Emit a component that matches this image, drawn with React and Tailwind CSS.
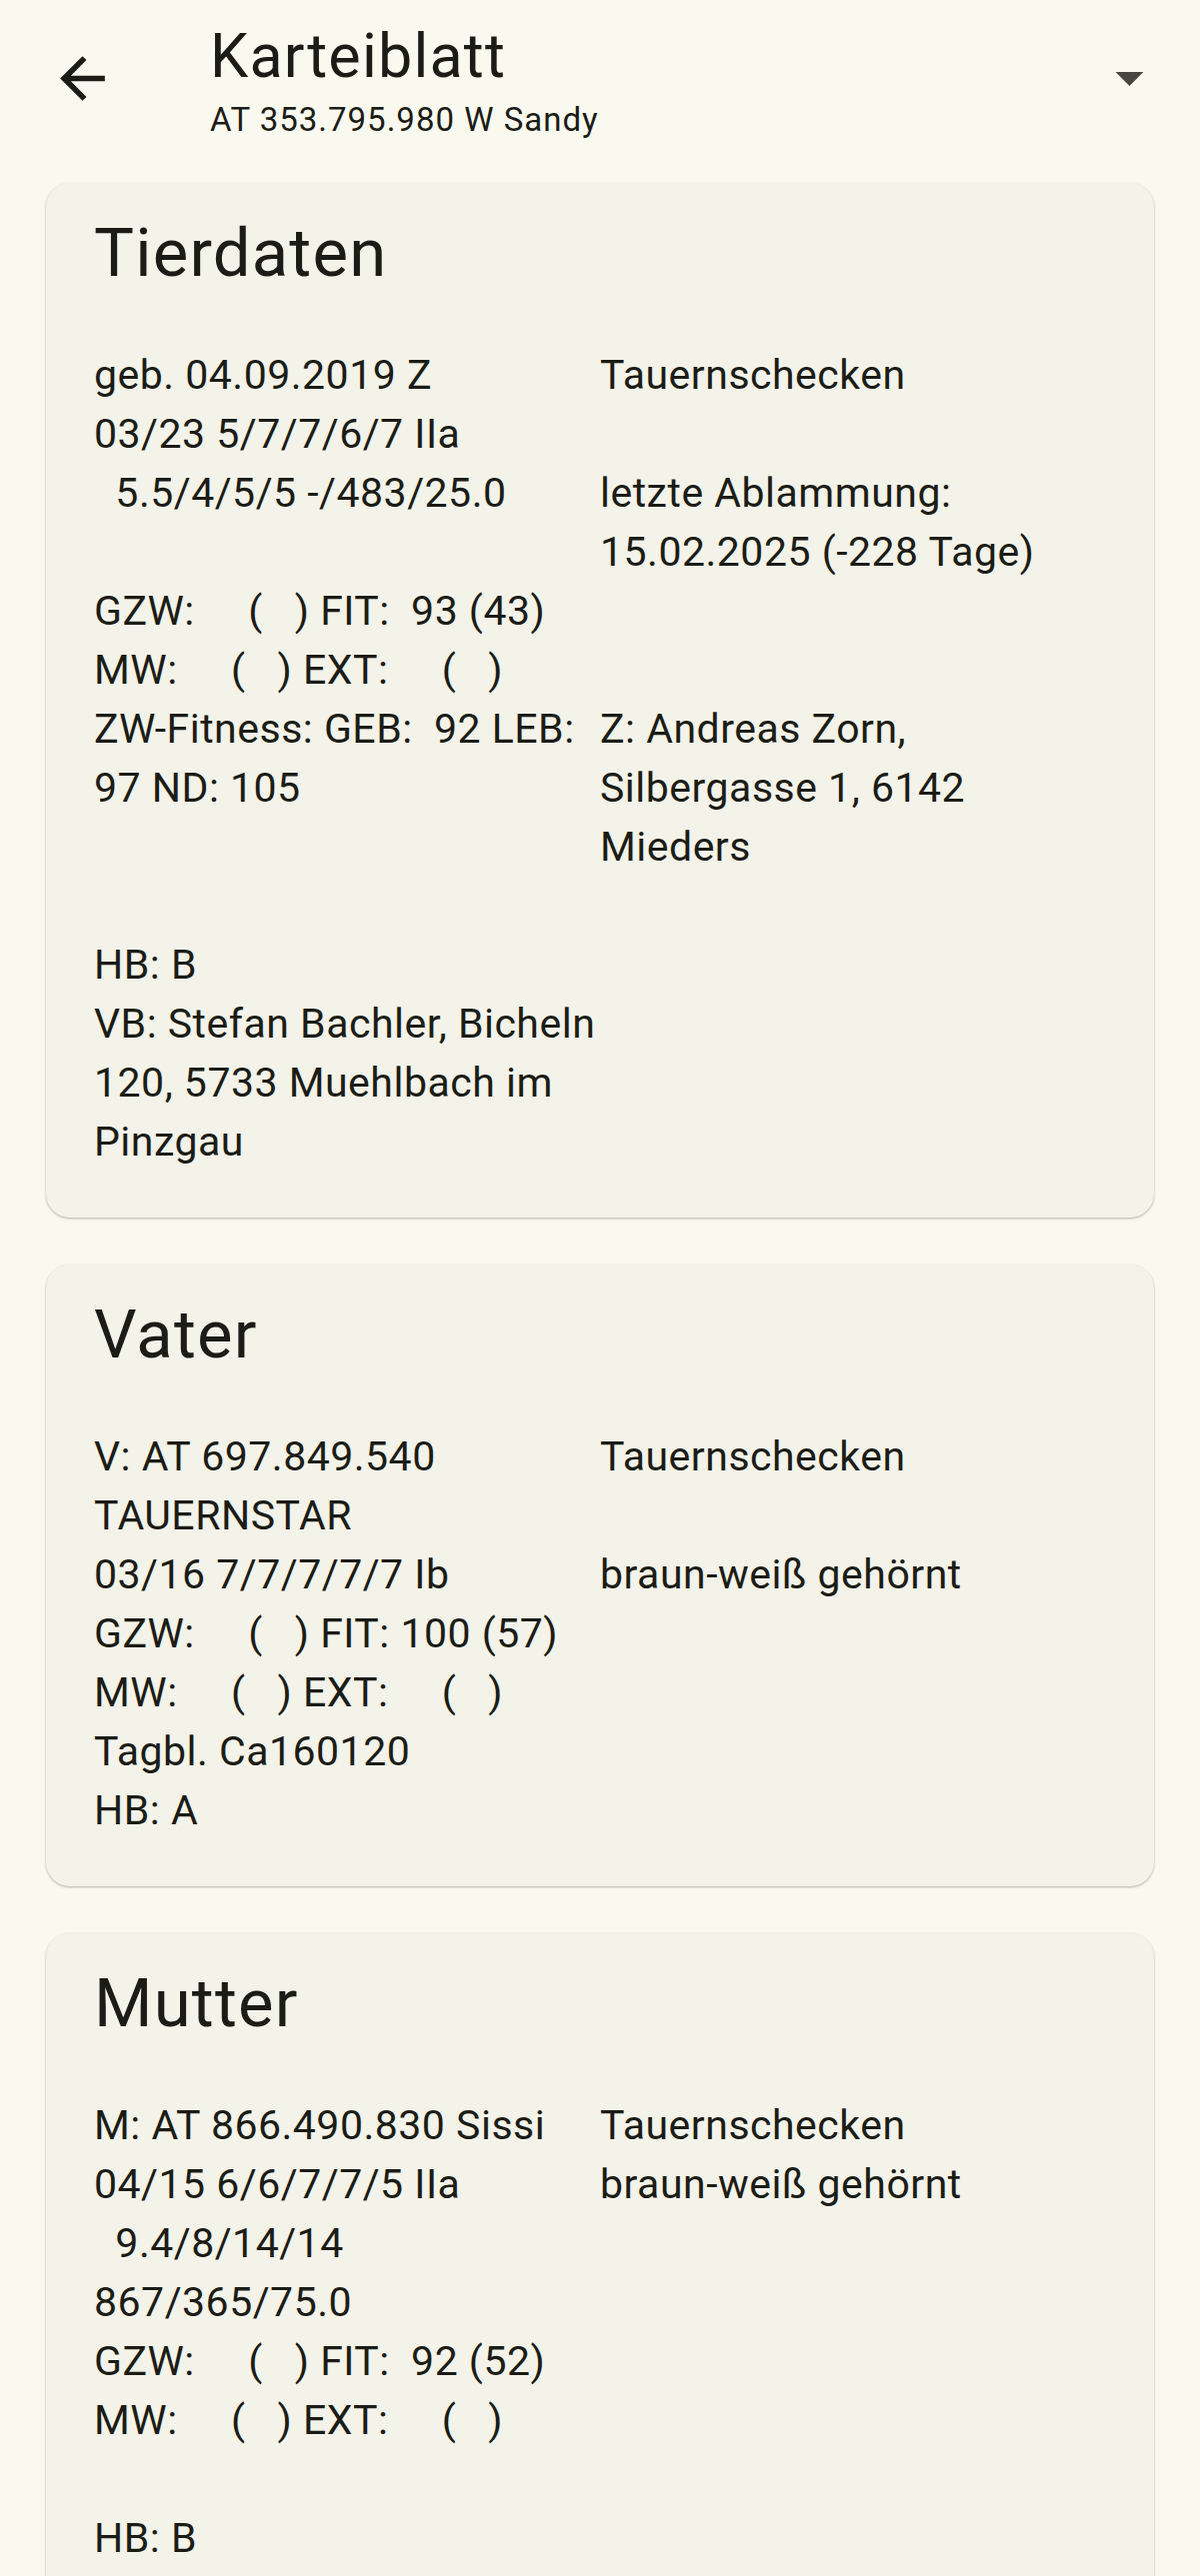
const sections = [
  {
    title: 'Tierdaten',
    rows: [
      ['geb. 04.09.2019 Z', 'Tauernschecken'],
      ['03/23 5/7/7/6/7 IIa', ''],
      ['  5.5/4/5/5 -/483/25.0', 'letzte Ablammung:\n15.02.2025 (-228 Tage)'],
      ['GZW:     (   ) FIT:  93 (43)', ''],
      ['MW:     (   ) EXT:     (   )', ''],
      ['ZW-Fitness: GEB:  92 LEB:\n97 ND: 105', 'Z: Andreas Zorn,\nSilbergasse 1, 6142\nMieders'],
      ['', ''],
      ['HB: B', ''],
      ['VB: Stefan Bachler, Bicheln\n120, 5733 Muehlbach im\nPinzgau', ''],
    ],
  },
  {
    title: 'Vater',
    rows: [
      ['V: AT 697.849.540\nTAUERNSTAR', 'Tauernschecken'],
      ['03/16 7/7/7/7/7 Ib', 'braun-weiß gehörnt'],
      ['GZW:     (   ) FIT: 100 (57)', ''],
      ['MW:     (   ) EXT:     (   )', ''],
      ['Tagbl. Ca160120', ''],
      ['HB: A', ''],
    ],
  },
  {
    title: 'Mutter',
    rows: [
      ['M: AT 866.490.830 Sissi', 'Tauernschecken'],
      ['04/15 6/6/7/7/5 IIa', 'braun-weiß gehörnt'],
      ['  9.4/8/14/14\n867/365/75.0', ''],
      ['GZW:     (   ) FIT:  92 (52)', ''],
      ['MW:     (   ) EXT:     (   )', ''],
      ['', ''],
      ['HB: B', ''],
    ],
  },
]

function Card({ title, rows }) {
  return (
    <div className="rounded-[24px] bg-[#f3f3e9] px-[48px] pt-[29px] pb-[46px] shadow-[0_1px_3px_rgba(0,0,0,0.18),0_1px_2px_rgba(0,0,0,0.12)]">
      <h2 className="text-[67px] leading-[82px] tracking-[1.2px]">{title}</h2>
      <div className="mt-[52px] grid grid-cols-2 text-[41px] leading-[59px] tracking-[0.5px]">
        {rows.map((r, i) => (
          <div key={i} className="contents">
            <div className="min-h-[59px] whitespace-pre">{r[0]}</div>
            <div className="min-h-[59px] whitespace-pre">{r[1]}</div>
          </div>
        ))}
      </div>
    </div>
  )
}

export default function App() {
  return (
    <div className="min-h-screen bg-[#f9f9ef] font-[family-name:Roboto,sans-serif] text-[#1c1c16]">
      <header className="flex pt-[20px]">
        <svg className="mt-[25px] ml-[49px] h-[67px] w-[67px] shrink-0" viewBox="0 -960 960 960" fill="currentColor">
          <path d="m313-440 224 224-57 56-320-320 320-320 57 56-224 224h487v80H313Z" />
        </svg>
        <div className="ml-[94px]">
          <h1 className="text-[61px] leading-[72px] tracking-[1.2px]">Karteiblatt</h1>
          <p className="mt-[8px] text-[33px] leading-[40px] tracking-[1px]">AT 353.795.980 W Sandy</p>
        </div>
        <svg className="mt-[24px] mr-[37px] ml-auto h-[67px] w-[67px] shrink-0 text-[#47473f]" viewBox="0 0 24 24" fill="currentColor">
          <path d="M7 10l5 5 5-5z" />
        </svg>
      </header>
      <main className="flex flex-col gap-[47px] px-[46px] pt-[43px] pb-[40px]">
        {sections.map(s => (
          <Card key={s.title} title={s.title} rows={s.rows} />
        ))}
      </main>
    </div>
  )
}
